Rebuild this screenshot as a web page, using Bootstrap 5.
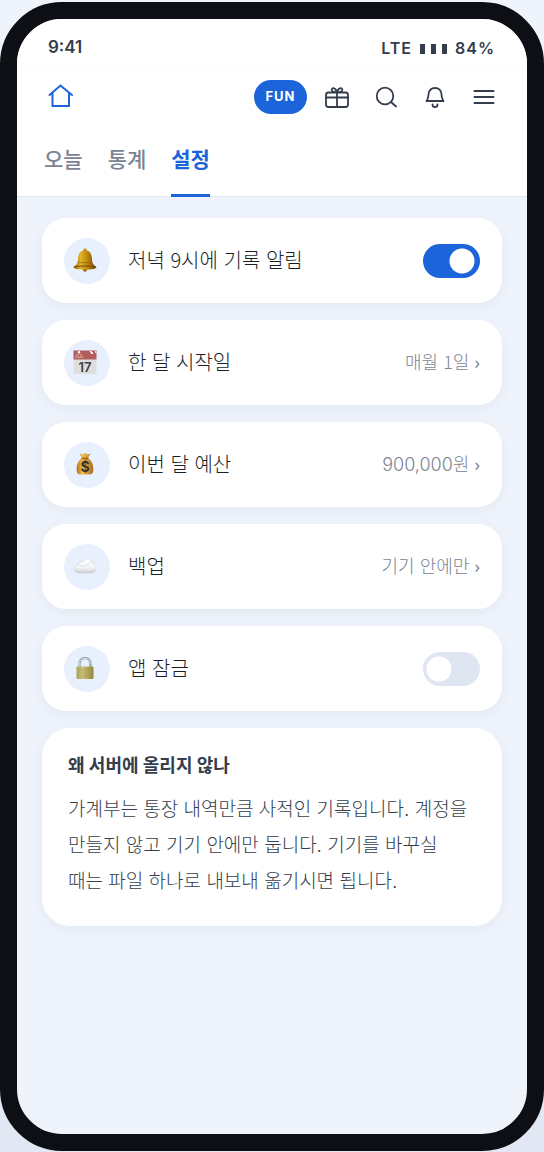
<!DOCTYPE html>
<html lang="ko">
<head>
<meta charset="utf-8">
<meta name="viewport" content="width=device-width, initial-scale=1">
<title>가계부 설정</title>
<link href="https://cdn.jsdelivr.net/npm/bootstrap@5.3.0/dist/css/bootstrap.min.css" rel="stylesheet">
<style>
  :root { --brand: #1b64da; --ink: #191f28; --slate: #333d4b; --muted: #7b8494; --canvas: #eff3fc; }
  body { font-family: Inter, "Noto Sans CJK KR", sans-serif; color: var(--ink); background: linear-gradient(#eff4fc, #e1e8f4); padding: 2px 0 1px; }
  .phone { min-height: calc(100vh - 3px); border: 17px solid #0e0f14; border-radius: 62px; background: var(--canvas); overflow: hidden; }
  .status { height: 48px; padding: 11px 32px 0 31px; font-size: 16px; font-weight: 600; color: var(--slate); border-bottom: 1px solid #fbfbfc; }
  .clock { font-size: 17px; }
  .carrier { letter-spacing: 1px; }
  .bars { display: inline-flex; gap: 6px; padding-top: 2px; }
  .bars i { width: 5px; height: 10px; background: var(--slate); }
  .tools { height: 60px; padding: 0 29px 0 30px; }
  .iconbtn { width: 28px; height: 28px; padding: 0; border: 0; background: none; color: var(--slate); display: block; }
  .iconbtn svg, .homelink svg { width: 28px; height: 28px; display: block; fill: none; stroke: currentColor; stroke-width: 2; stroke-linecap: round; stroke-linejoin: round; }
  .homelink { color: var(--brand); }
  .icons { gap: 21px; }
  .fun { width: 53px; height: 34px; padding: 0; border: 0; border-radius: 17px; background: var(--brand); color: #fff; font-size: 13px; font-weight: 700; letter-spacing: 1px; }
  .tabs { gap: 25px; padding: 0 27px; height: 70px; border-bottom: 1px solid #dfe7f4; }
  .tabs a { height: 70px; padding-top: 14px; font-size: 21px; line-height: 38px; font-weight: 500; color: var(--muted); text-decoration: none; border-bottom: 3px solid transparent; }
  .tabs a.active { color: var(--brand); font-weight: 700; border-color: var(--brand); }
  .content { padding: 21px 25px; gap: 17px; }
  .panel { background: #fff; border-radius: 24px; box-shadow: 0 4px 14px rgba(40, 80, 90, .06); }
  .setting { height: 85px; padding: 0 22px; gap: 18px; }
  .bubble { width: 46px; height: 46px; padding: 0 4px 2px 0; border-radius: 50%; background: #e8f0fe; }
  .bubble svg { width: 24px; height: 24px; }
  .name, .value { font-family: "Noto Sans CJK KR", sans-serif; padding-bottom: 2px; }
  .name { font-size: 20px; font-weight: 300; line-height: 28px; }
  .value { font-size: 18px; font-weight: 300; line-height: 28px; color: var(--muted); text-decoration: none; }
  .value.money { font-family: Inter, "Noto Sans CJK KR", sans-serif; padding-bottom: 0; }
  .chev { font-family: "Noto Sans", sans-serif; font-weight: 400; }
  .toggle.form-check-input { width: 57px; height: 34px; margin: 0; border: 0; border-radius: 17px; background: radial-gradient(circle, #fff 12px, transparent 13px) left / 32px 34px no-repeat #dfe5f1; }
  .toggle.form-check-input:checked { background: radial-gradient(circle, #fff 12px, transparent 13px) right / 36px 34px no-repeat var(--brand); }
  .note { padding: 24px 28px 26px 26px; word-break: keep-all; border-radius: 28px; }
  .note h2 { font-size: 18px; line-height: 28px; font-weight: 700; color: var(--slate); margin: 0 0 12px; }
  .note p { font-size: 19px; line-height: 36px; font-weight: 300; color: var(--slate); margin: 0; }
</style>
</head>
<body>
<div class="phone d-flex flex-column">
  <header class="bg-white">
    <div class="status d-flex align-items-center justify-content-between">
      <span class="clock">9:41</span>
      <span class="carrier d-flex align-items-center gap-2">LTE <span class="bars"><i></i><i></i><i></i></span> 84%</span>
    </div>
    <div class="tools d-flex align-items-center justify-content-between">
      <a class="homelink" href="#" aria-label="홈"><svg viewBox="0 0 28 28"><path stroke-linejoin="miter" d="M2.500 12 13.500 2.500 25 12M5.500 10V23H22V10"/></svg></a>
      <div class="d-flex align-items-center gap-3">
        <button class="fun" type="button">FUN</button>
        <div class="icons d-flex">
          <button class="iconbtn" type="button" aria-label="선물"><svg viewBox="0 0 28 28"><g stroke-width="1.8"><rect x="3" y="9.500" width="22" height="14.500" rx="2.500"/><path d="M3 14.500H25M14 9.500V24M14 9C12 4 8.500 4.500 8.700 7 8.900 8.800 11 9.300 14 9.200 17 9.300 19.100 8.800 19.300 7 19.500 4.500 16 4 14 9"/></g></svg></button>
          <button class="iconbtn" type="button" aria-label="검색"><svg viewBox="0 0 28 28"><g stroke-width="1.8"><circle cx="13" cy="13" r="8.300"/><path d="m19 19 5 4.500"/></g></svg></button>
          <button class="iconbtn" type="button" aria-label="알림"><svg viewBox="0 0 28 28"><g stroke-width="1.8"><path d="M5.500 18C7 16 7.500 14.500 7.500 11.500 7.500 7.500 10.300 5 14 5S20.500 7.500 20.500 11.500C20.500 14.500 21 16 22.500 18Z"/><path d="M11.500 21.500C11.500 25 16.500 25 16.500 21.500"/></g></svg></button>
          <button class="iconbtn" type="button" aria-label="메뉴"><svg viewBox="0 0 28 28"><path d="M4.500 8H23.500M4.500 14H23.500M4.500 20H23.500"/></svg></button>
        </div>
      </div>
    </div>
    <nav class="tabs d-flex">
      <a href="#">오늘</a><a href="#">통계</a><a class="active" href="#" aria-current="page">설정</a>
    </nav>
  </header>
  <main class="content d-flex flex-column flex-grow-1">
    <div class="panel setting d-flex align-items-center">
      <span class="bubble d-flex align-items-center justify-content-center"><svg viewBox="0 0 24 24"><defs><linearGradient id="gold"><stop offset="0" stop-color="#8c5c00"/><stop offset=".3" stop-color="#e3b52a"/><stop offset=".65" stop-color="#b88006"/><stop offset="1" stop-color="#6b3c08"/></linearGradient></defs><circle cx="12" cy="21.500" r="2.200" fill="#a86a12"/><path d="M12 .5c1.200 0 2 .8 1.800 2 4.200 1.200 5 5 5.200 9 .2 4 1.500 5.500 4.500 7.500-1 2-4 2.500-11.500 2.500S1.500 21 .5 19C3.500 17 4.800 15.500 5 11.500c.2-4 1-7.800 5.200-9C10 1.300 10.800.5 12 .5Z" fill="url(#gold)"/><path d="M1 19.200c5-1.600 17-1.600 22 0" stroke="#754604" fill="none"/><path d="M5 14c4 1 10 1 14 0" stroke="#996300" stroke-width=".7" fill="none"/></svg></span>
      <label class="name flex-grow-1" for="reminder">저녁 9시에 기록 알림</label>
      <input class="form-check-input toggle" type="checkbox" role="switch" id="reminder" checked>
    </div>
    <div class="panel setting d-flex align-items-center">
      <span class="bubble d-flex align-items-center justify-content-center"><svg viewBox="0 0 24 24"><path fill="#dedede" d="M.5 9h23v15H.5z"/><path fill="#b45b5c" d="M.5.5h23V9.500H.5z"/><path d="m6 1-1 2h2ZM17 1l3 2-1 1ZM22 1l1 2" stroke="#fff" fill="#fff"/><text x="1.500" y="8" font-size="5" fill="#e9caca">JUL</text><text x="12" y="21.500" font-size="13" font-weight="600" text-anchor="middle" fill="#3c4044">17</text></svg></span>
      <span class="name flex-grow-1">한 달 시작일</span>
      <a class="value" href="#">매월 1일 <span class="chev">›</span></a>
    </div>
    <div class="panel setting d-flex align-items-center">
      <span class="bubble d-flex align-items-center justify-content-center"><svg viewBox="0 0 24 24"><defs><linearGradient id="sack"><stop offset="0" stop-color="#a77018"/><stop offset=".35" stop-color="#f2c34c"/><stop offset="1" stop-color="#a66b20"/></linearGradient></defs><path d="M9 6 6.500 1.500l3 1L12 1l2.500 1.500 3-1L15 6c4 3 5.500 7 5.300 12-.1 3.500-1.500 4.500-4 4.500H7.700c-2.500 0-3.900-1-4-4.500C3.500 13 5 9 9 6Z" fill="url(#sack)"/><path d="M8.500 6.500h7" stroke="#a65e18" stroke-width="1.600"/><text x="12" y="20" font-size="14" font-weight="700" text-anchor="middle" fill="#33322e">$</text></svg></span>
      <span class="name flex-grow-1">이번 달 예산</span>
      <a class="value money" href="#">900,000원 <span class="chev">›</span></a>
    </div>
    <div class="panel setting d-flex align-items-center">
      <span class="bubble d-flex align-items-center justify-content-center"><svg viewBox="0 0 24 24"><defs><linearGradient id="cloud" x2="0" y2="1"><stop offset="0" stop-color="#fff"/><stop offset=".65" stop-color="#f1f2f4"/><stop offset="1" stop-color="#c6cbd3"/></linearGradient></defs><path d="M6 19c-6 0-6.500-7-1-8 .2-3 3-4 5-3C12 3 18 4 18.500 8.500c6 .5 6.500 9.500.5 10.500Z" fill="url(#cloud)" stroke="#cdd1d8" stroke-width=".6"/><path d="M5 11c2 0 3 .7 4 2 2-2.500 6-1 7-4" fill="none" stroke="#dcdfe4"/></svg></span>
      <span class="name flex-grow-1">백업</span>
      <a class="value" href="#">기기 안에만 <span class="chev">›</span></a>
    </div>
    <div class="panel setting d-flex align-items-center">
      <span class="bubble d-flex align-items-center justify-content-center"><svg viewBox="0 0 24 24"><defs><linearGradient id="brass"><stop offset="0" stop-color="#aba254"/><stop offset=".35" stop-color="#c9c178"/><stop offset="1" stop-color="#918739"/></linearGradient></defs><path d="M6.500 12V8c0-8 11-8 11 0v4" fill="none" stroke="#9aaab5" stroke-width="2.500"/><path d="M6.200 11V8c0-7.500 11.600-7.500 11.600 0" fill="none" stroke="#ccd8e2" stroke-width="1"/><rect x="3.500" y="10.500" width="17" height="12.500" rx="1" fill="url(#brass)"/><path d="M4 14h16M4 17h16M4 20h16" stroke="#aa9e50" stroke-width=".4"/></svg></span>
      <label class="name flex-grow-1" for="lock">앱 잠금</label>
      <input class="form-check-input toggle" type="checkbox" role="switch" id="lock">
    </div>
    <section class="panel note">
      <h2>왜 서버에 올리지 않나</h2>
      <p>가계부는 통장 내역만큼 사적인 기록입니다. 계정을 만들지 않고 기기 안에만 둡니다. 기기를 바꾸실 때는 파일 하나로 내보내 옮기시면 됩니다.</p>
    </section>
  </main>
</div>
<script src="https://cdn.jsdelivr.net/npm/bootstrap@5.3.0/dist/js/bootstrap.bundle.min.js"></script>
</body>
</html>
